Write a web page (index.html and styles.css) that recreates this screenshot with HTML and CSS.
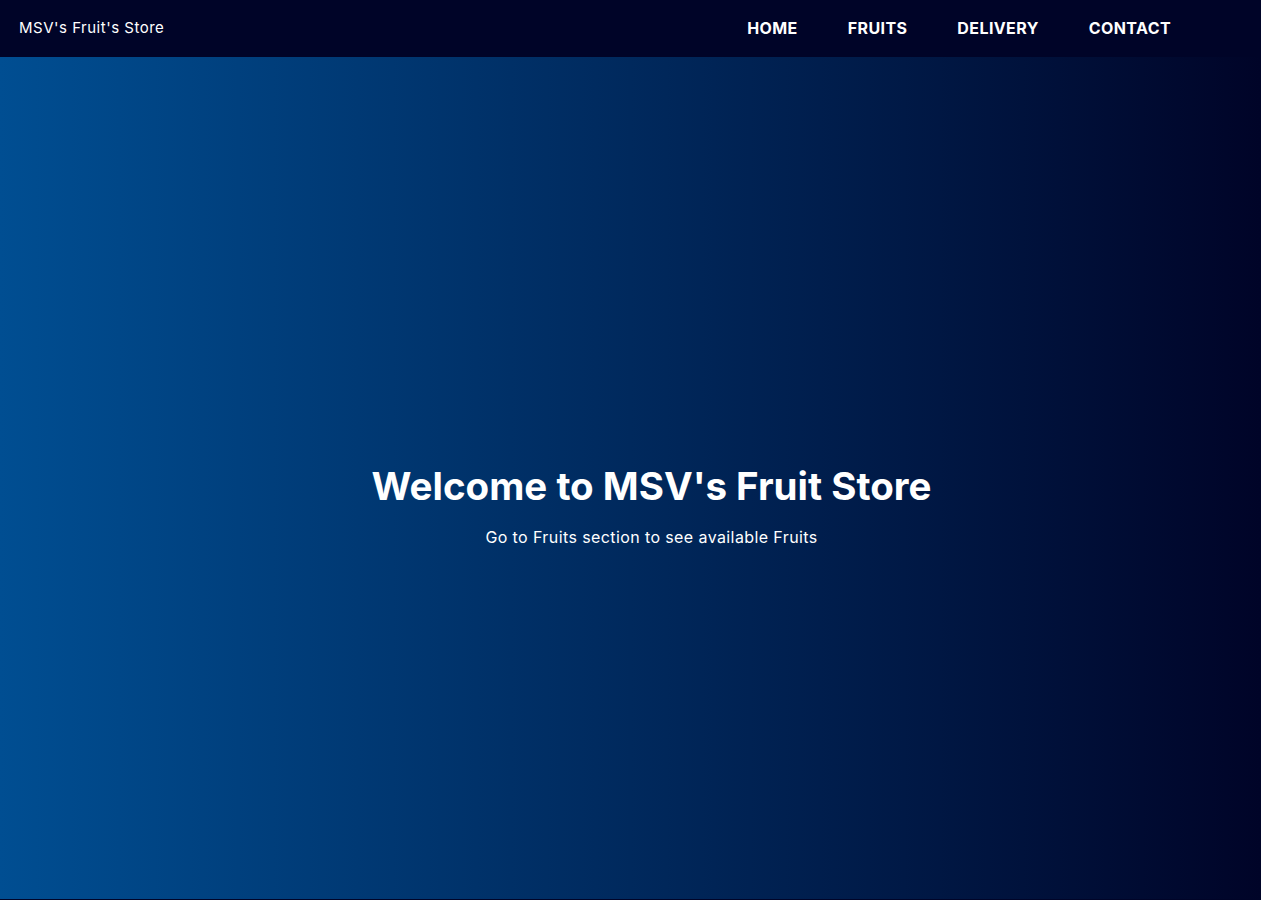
FILE: index.html
```html
<!DOCTYPE html>
<html lang="en">
<head>
<meta charset="utf-8">
<title>MSV's Fruit's Store</title>
<link rel="stylesheet" href="styles.css">
</head>
<body>
<header class="navbar">
  <div class="brand">MSV's Fruit's Store</div>
  <nav class="nav">
    <a href="#" class="nav-link">HOME</a>
    <a href="#" class="nav-link">FRUITS</a>
    <a href="#" class="nav-link">DELIVERY</a>
    <a href="#" class="nav-link">CONTACT</a>
  </nav>
</header>
<main class="hero">
  <h1 class="hero-title">Welcome to MSV's Fruit Store</h1>
  <p class="hero-sub">Go to Fruits section to see available Fruits</p>
</main>
</body>
</html>
```

FILE: styles.css
```css
* { box-sizing: border-box; }
html, body { margin: 0; padding: 0; }
body {
  background: #000428;
  font-family: Inter, "Open Sans", sans-serif;
  color: #fff;
  height: 900px;
  overflow: hidden;
}
.navbar {
  height: 57px;
  background: #000428;
  display: flex;
  align-items: center;
  justify-content: space-between;
  padding: 0 90px 2px 19px;
}
.brand {
  font-size: 15px;
  font-weight: 400;
  letter-spacing: 0.5px;
}
.nav {
  display: flex;
  gap: 50px;
}
.nav-link {
  color: #fff;
  text-decoration: none;
  font-weight: 700;
  font-size: 16px;
  letter-spacing: 0.4px;
}
.hero {
  height: 842px;
  background: linear-gradient(to right, #004e92, #000428);
  display: flex;
  flex-direction: column;
  align-items: center;
  justify-content: center;
  padding: 54px 0 0 42px;
}
.hero-title {
  margin: 0;
  font-size: 38.5px;
  font-weight: 700;
  line-height: 1.2;
}
.hero-sub {
  margin: 18px 0 0;
  font-size: 16px;
  letter-spacing: 0.4px;
}
```
